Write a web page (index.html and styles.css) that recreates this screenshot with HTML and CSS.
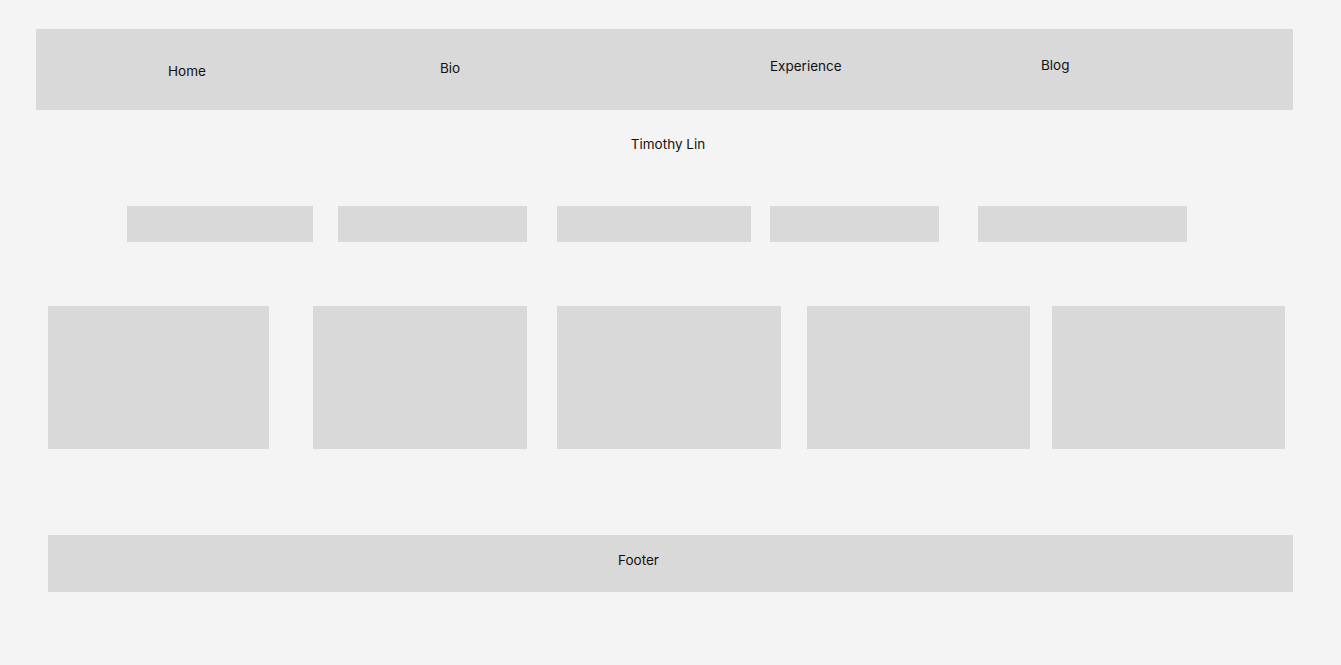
FILE: index.html
```html
<!DOCTYPE html>
<html lang="en">
<head>
    <meta charset="UTF-8">
    <meta name="viewport" content="width=device-width, initial-scale=1.0">
    <title>Timothy Lin</title>
    <link rel="stylesheet" href="styles.css">
</head>
<body>
    <nav class="nav">
        <a class="nav-link home" href="#">Home</a>
        <a class="nav-link bio" href="#">Bio</a>
        <a class="nav-link experience" href="#">Experience</a>
        <a class="nav-link blog" href="#">Blog</a>
    </nav>

    <h1 class="title">Timothy Lin</h1>

    <div class="tabs">
        <div class="tab tab-1"></div>
        <div class="tab tab-2"></div>
        <div class="tab tab-3"></div>
        <div class="tab tab-4"></div>
        <div class="tab tab-5"></div>
    </div>

    <div class="cards">
        <div class="card card-1"></div>
        <div class="card card-2"></div>
        <div class="card card-3"></div>
        <div class="card card-4"></div>
        <div class="card card-5"></div>
    </div>

    <footer class="footer">Footer</footer>
</body>
</html>
```

FILE: styles.css
```css
body {
    font-family: Inter, "Noto Sans", sans-serif;
    font-size: 13.5px;
    line-height: 16px;
    color: #111111;
    background-color: #f4f4f4;
    margin: 0;
    padding: 29px 0 0 0;
}
.nav {
    display: flex;
    align-items: flex-start;
    margin: 0 48px 0 36px;
    height: 81px;
    padding-left: 132px;
    background-color: #d9d9d9;
}
.nav-link {
    color: #111111;
    text-decoration: none;
}
.home {
    width: 272px;
    padding-top: 34px;
}
.bio {
    width: 330px;
    padding-top: 31px;
}
.experience {
    width: 271px;
    padding-top: 29px;
}
.blog {
    padding-top: 28px;
}
.title {
    font-size: 13.5px;
    font-weight: normal;
    margin: 26px 0 0 0;
    padding-right: 5px;
    text-align: center;
}
.tabs {
    display: flex;
    margin-top: 54px;
    padding-left: 127px;
}
.tab {
    height: 36px;
    background-color: #d9d9d9;
}
.tab-1 { width: 186px; }
.tab-2 { width: 189px; margin-left: 25px; }
.tab-3 { width: 194px; margin-left: 30px; }
.tab-4 { width: 169px; margin-left: 19px; }
.tab-5 { width: 209px; margin-left: 39px; }
.cards {
    display: flex;
    margin-top: 64px;
    padding-left: 48px;
}
.card {
    height: 143px;
    background-color: #d9d9d9;
}
.card-1 { width: 221px; }
.card-2 { width: 214px; margin-left: 44px; }
.card-3 { width: 224px; margin-left: 30px; }
.card-4 { width: 223px; margin-left: 26px; }
.card-5 { width: 233px; margin-left: 22px; }
.footer {
    margin: 86px 48px 0 48px;
    height: 57px;
    box-sizing: border-box;
    padding: 17px 0 0 570px;
    background-color: #d9d9d9;
}
```
